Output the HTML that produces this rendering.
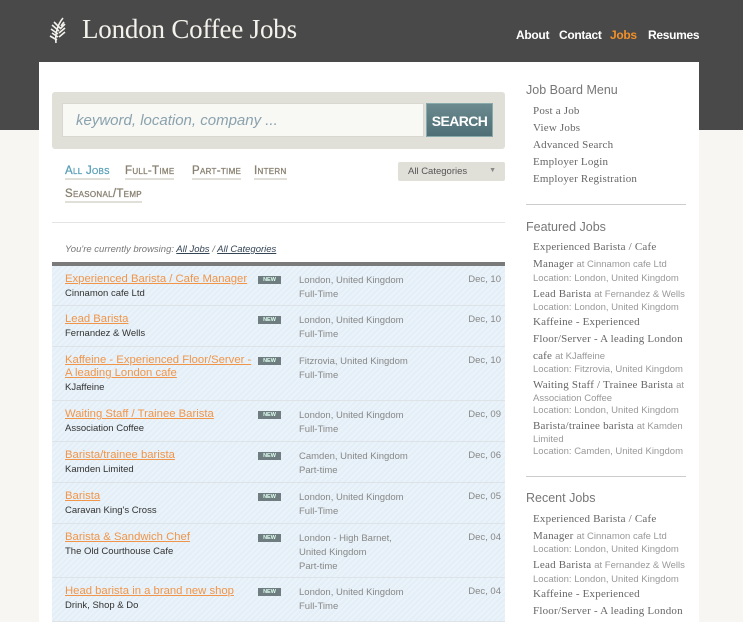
<!DOCTYPE html>
<html><head><meta charset="utf-8"><style>
*{margin:0;padding:0;box-sizing:border-box}
body{width:743px;height:620px;overflow:hidden;background:#f7f6f2;font-family:"Liberation Sans",sans-serif;position:relative}
.hdr{position:absolute;left:0;top:0;width:743px;height:130px;background:#494949}
.logo{position:absolute;left:82px;top:14px;font-family:"Liberation Serif",serif;font-size:27px;color:#f4f2ec;letter-spacing:-0.2px}
.nav{position:absolute;top:28px;font-size:12px;font-weight:bold;color:#fff;letter-spacing:-0.3px}
.panel{position:absolute;left:39px;top:62px;width:660px;height:560px;background:#fff}
.a{position:absolute;white-space:nowrap}
.sb{position:absolute;left:52px;top:92px;width:453px;height:57px;background:#e0dfd8;border-radius:3px}
.inp{position:absolute;left:10px;top:11px;width:362px;height:34px;background:#f8f8f5;border:1px solid #d8d7d0;font-style:italic;color:#8aa2ad;font-size:15px;padding:8px 13px}
.btn{position:absolute;left:374px;top:11px;width:67px;height:34px;background:linear-gradient(#6a8a90,#4f6f76);color:#fff;font-weight:bold;font-size:14px;letter-spacing:-0.6px;text-align:center;line-height:34px;border:1px solid #8aa}
.f{position:absolute;font-size:11.5px;color:#8a8272;border-bottom:2px solid #e0dfd8;font-variant:small-caps;letter-spacing:.3px;line-height:14px;-webkit-text-stroke:0.3px}
.row{position:absolute;left:52px;width:453px;background:repeating-linear-gradient(135deg,#eaf3f9 0 2px,#e3eef6 2px 4px);border-bottom:1px solid #dde3e6}
.t{position:absolute;left:13px;top:7px;width:188px;font-size:11.3px;color:#f0954a;text-decoration:underline;line-height:13px}
.c{position:absolute;left:13px;font-size:9.5px;color:#333}
.new{position:absolute;left:206px;top:10px;width:23px;height:8px;background:#6f7d80;color:#dfe;font-size:5.5px;font-weight:bold;text-align:center;line-height:8px}
.loc{position:absolute;left:247px;top:8px;width:110px;font-size:9.5px;color:#888;line-height:14px}
.d{position:absolute;right:4px;top:8px;font-size:9.5px;color:#888}
.s{position:absolute;left:533px;font-family:"Liberation Serif",serif;font-size:11px;letter-spacing:0.2px;color:#666;white-space:nowrap}
.s span{font-family:"Liberation Sans",sans-serif;font-size:9.5px;letter-spacing:0;color:#999}
.sl{position:absolute;left:533px;font-size:9.5px;color:#999;white-space:nowrap}
.h{position:absolute;left:526px;font-size:12.5px;color:#777}
.hr{position:absolute;left:526px;width:160px;height:1px;background:#ccc}
</style></head><body>
<div class="hdr"></div>
<svg class="a" style="left:43px;top:17px" width="26" height="27" viewBox="0 0 26 27"><path d="M13 26 C12 18 14 8 20 1 M15 20 L9 16 M15 17 L8 12 M16 14 L9 8 M17 11 L11 5 M16 20 L22 15 M16 16 L22 11 M17 12 L22 7 M18 9 L21 5 M14 23 L7 19" stroke="#f4f2ec" stroke-width="1.6" fill="none"/></svg>
<div class="logo">London Coffee Jobs</div>
<div class="nav" style="left:516px">About</div>
<div class="nav" style="left:559px">Contact</div>
<div class="nav" style="left:610px;color:#f0902a">Jobs</div>
<div class="nav" style="left:648px">Resumes</div>
<div class="panel"></div>
<div class="sb"><div class="inp">keyword, location, company ...</div><div class="btn">SEARCH</div></div>
<div class="f" style="left:65px;top:164px;color:#5aa0b8">All Jobs</div>
<div class="f" style="left:125px;top:164px">Full-Time</div>
<div class="f" style="left:192px;top:164px">Part-time</div>
<div class="f" style="left:254px;top:164px">Intern</div>
<div class="f" style="left:65px;top:187px">Seasonal/Temp</div>
<div class="a" style="left:398px;top:162px;width:107px;height:19px;background:#e0dfd8;border-radius:2px;font-size:9.5px;color:#555;padding:4px 10px">All Categories<span style="position:absolute;right:9px;top:5px;font-size:7px;color:#888">▼</span></div>
<div class="a" style="left:52px;top:222px;width:453px;height:1px;background:#e4e4e4"></div>
<div class="a" style="left:65px;top:244px;font-size:9.5px;font-style:italic;color:#777">You're currently browsing: <span style="color:#345;text-decoration:underline">All Jobs</span> / <span style="color:#345;text-decoration:underline">All Categories</span></div>
<div class="a" style="left:52px;top:262px;width:453px;height:4px;background:#7a7a7a"></div>

<div class="row" style="top:266px;height:40px"><div class="t">Experienced Barista / Cafe Manager</div><div class="new">NEW</div><div class="loc">London, United Kingdom<br>Full-Time</div><div class="d">Dec, 10</div><div class="c" style="top:22px">Cinnamon cafe Ltd</div></div>
<div class="row" style="top:306px;height:41px"><div class="t">Lead Barista</div><div class="new">NEW</div><div class="loc">London, United Kingdom<br>Full-Time</div><div class="d">Dec, 10</div><div class="c" style="top:22px">Fernandez &amp; Wells</div></div>
<div class="row" style="top:347px;height:54px"><div class="t">Kaffeine - Experienced Floor/Server - A leading London cafe</div><div class="new">NEW</div><div class="loc">Fitzrovia, United Kingdom<br>Full-Time</div><div class="d">Dec, 10</div><div class="c" style="top:35px">KJaffeine</div></div>
<div class="row" style="top:401px;height:41px"><div class="t">Waiting Staff / Trainee Barista</div><div class="new">NEW</div><div class="loc">London, United Kingdom<br>Full-Time</div><div class="d">Dec, 09</div><div class="c" style="top:22px">Association Coffee</div></div>
<div class="row" style="top:442px;height:41px"><div class="t">Barista/trainee barista</div><div class="new">NEW</div><div class="loc">Camden, United Kingdom<br>Part-time</div><div class="d">Dec, 06</div><div class="c" style="top:22px">Kamden Limited</div></div>
<div class="row" style="top:483px;height:41px"><div class="t">Barista</div><div class="new">NEW</div><div class="loc">London, United Kingdom<br>Full-Time</div><div class="d">Dec, 05</div><div class="c" style="top:22px">Caravan King's Cross</div></div>
<div class="row" style="top:524px;height:54px"><div class="t">Barista &amp; Sandwich Chef</div><div class="new">NEW</div><div class="loc">London - High Barnet, United Kingdom<br>Part-time</div><div class="d">Dec, 04</div><div class="c" style="top:22px">The Old Courthouse Cafe</div></div>
<div class="row" style="top:578px;height:44px"><div class="t">Head barista in a brand new shop</div><div class="new">NEW</div><div class="loc">London, United Kingdom<br>Full-Time</div><div class="d">Dec, 04</div><div class="c" style="top:22px">Drink, Shop &amp; Do</div></div>

<div class="h" style="top:83px">Job Board Menu</div>
<div class="s" style="top:105px">Post a Job</div>
<div class="s" style="top:122px">View Jobs</div>
<div class="s" style="top:139px">Advanced Search</div>
<div class="s" style="top:156px">Employer Login</div>
<div class="s" style="top:173px">Employer Registration</div>
<div class="hr" style="top:204px"></div>
<div class="h" style="top:220px">Featured Jobs</div>
<div class="s" style="top:241px">Experienced Barista / Cafe</div>
<div class="s" style="top:258px">Manager <span>at Cinnamon cafe Ltd</span></div>
<div class="sl" style="top:273px">Location: London, United Kingdom</div>
<div class="s" style="top:288px">Lead Barista <span>at Fernandez &amp; Wells</span></div>
<div class="sl" style="top:302px">Location: London, United Kingdom</div>
<div class="s" style="top:316px">Kaffeine - Experienced</div>
<div class="s" style="top:333px">Floor/Server - A leading London</div>
<div class="s" style="top:350px">cafe <span>at KJaffeine</span></div>
<div class="sl" style="top:364px">Location: Fitzrovia, United Kingdom</div>
<div class="s" style="top:379px">Waiting Staff / Trainee Barista <span>at</span></div>
<div class="sl" style="top:393px">Association Coffee</div>
<div class="sl" style="top:405px">Location: London, United Kingdom</div>
<div class="s" style="top:420px">Barista/trainee barista <span>at Kamden</span></div>
<div class="sl" style="top:434px">Limited</div>
<div class="sl" style="top:446px">Location: Camden, United Kingdom</div>
<div class="hr" style="top:476px"></div>
<div class="h" style="top:491px">Recent Jobs</div>
<div class="s" style="top:513px">Experienced Barista / Cafe</div>
<div class="s" style="top:530px">Manager <span>at Cinnamon cafe Ltd</span></div>
<div class="sl" style="top:544px">Location: London, United Kingdom</div>
<div class="s" style="top:559px">Lead Barista <span>at Fernandez &amp; Wells</span></div>
<div class="sl" style="top:574px">Location: London, United Kingdom</div>
<div class="s" style="top:588px">Kaffeine - Experienced</div>
<div class="s" style="top:605px">Floor/Server - A leading London</div>
</body></html>
